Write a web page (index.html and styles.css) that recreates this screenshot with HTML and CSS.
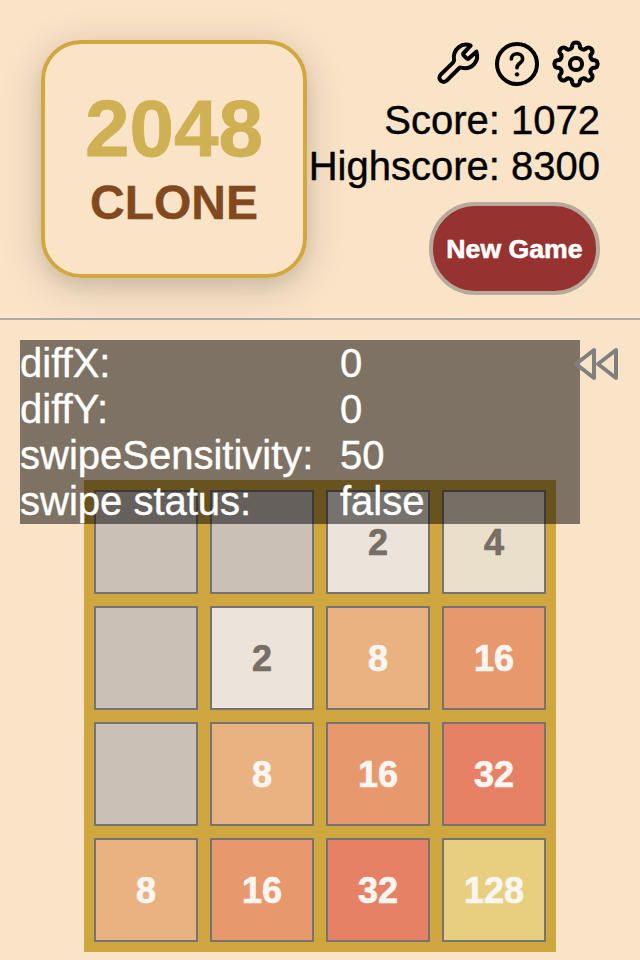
FILE: index.html
```html
<!DOCTYPE html>
<html lang="en">
<head>
<meta charset="utf-8">
<title>2048 Clone</title>
<link rel="stylesheet" href="styles.css">
</head>
<body>
<header class="header">
  <div class="logo">
    <div class="logo-number">2048</div>
    <div class="logo-word">CLONE</div>
  </div>
  <div class="info">
    <nav class="icons">
      <svg class="icon" viewBox="-1 -3 144 144"><path d="M109 14C84 3 54 24 59 58Q59 62 56 65L19 101A12.5 12.5 0 0 0 37 119L75 81Q78 79 81 80C113 88 136 60 126 32L104 52Q100 55 97 52L88 43Q85 40 88 36Z"/></svg>
      <svg class="icon" viewBox="0 0 144 144"><circle cx="72" cy="72" r="60"/><path class="thin" d="M55 57C55 36 89 36 89 57C89 69 72 69 72 83"/><circle class="dot" cx="72" cy="103" r="6.5"/></svg>
      <svg class="icon gear" viewBox="-22.6 -22.6 45.2 45.2"><circle r="5.7"/><path d="M-3.59-17.64A3.75 3.75 0 0 1 3.59-17.64A3.55 3.55 0 0 0 9.93-15.01A3.75 3.75 0 0 1 15.01-9.93A3.55 3.55 0 0 0 17.64-3.59A3.75 3.75 0 0 1 17.64 3.59A3.55 3.55 0 0 0 15.01 9.93A3.75 3.75 0 0 1 9.93 15.01A3.55 3.55 0 0 0 3.59 17.64A3.75 3.75 0 0 1-3.59 17.64A3.55 3.55 0 0 0-9.93 15.01A3.75 3.75 0 0 1-15.01 9.93A3.55 3.55 0 0 0-17.64 3.59A3.75 3.75 0 0 1-17.64-3.59A3.55 3.55 0 0 0-15.01-9.93A3.75 3.75 0 0 1-9.93-15.01A3.55 3.55 0 0 0-3.59-17.64Z"/></svg>
    </nav>
    <div class="score">Score: 1072</div>
    <div class="score">Highscore: 8300</div>
    <button class="new-game">New Game</button>
  </div>
</header>
<main class="main">
  <div class="toolbar">
    <svg class="icon rewind" viewBox="0 0 144 144"><path d="M12 72L66 30V114ZM78 72L132 30V114Z"/></svg>
  </div>
  <div class="board">
    <div class="tile"></div><div class="tile"></div><div class="tile t2">2</div><div class="tile t4">4</div>
    <div class="tile"></div><div class="tile t2">2</div><div class="tile t8">8</div><div class="tile t16">16</div>
    <div class="tile"></div><div class="tile t8">8</div><div class="tile t16">16</div><div class="tile t32">32</div>
    <div class="tile t8">8</div><div class="tile t16">16</div><div class="tile t32">32</div><div class="tile t128">128</div>
  </div>
  <div class="debug">
    <span>diffX:</span><span>0</span>
    <span>diffY:</span><span>0</span>
    <span>swipeSensitivity:</span><span>50</span>
    <span>swipe status:</span><span>false</span>
  </div>
</main>
</body>
</html>
```
FILE: styles.css
```css
* { box-sizing: border-box; }
body {
  margin: 0;
  height: 960px;
  overflow: hidden;
  background: #fae4c8;
  color: #000;
  font: 40px/46px "Liberation Sans", Arial, sans-serif;
  -webkit-text-stroke: .4px;
}
.header {
  display: flex;
  justify-content: space-between;
  align-items: flex-start;
  height: 320px;
  padding: 40px 40px 0 41px;
  border-bottom: 2px solid #a9a9a9;
}
.logo {
  flex: none;
  width: 266px;
  height: 238px;
  padding-top: 41px;
  border: 4px solid #d2a740;
  border-radius: 40px;
  box-shadow: 0 8px 40px rgba(0, 0, 0, .18), 0 8px 16px rgba(0, 0, 0, .06);
  text-align: center;
  font-weight: bold;
}
.logo-number { font-size: 80px; line-height: 88px; color: #cfb053; -webkit-text-stroke: .8px; }
.logo-word { font-size: 48px; line-height: 60px; color: #82491f; }
.info {
  display: flex;
  flex-direction: column;
  align-items: flex-end;
  width: 0;
  white-space: nowrap;
}
.icons { display: flex; gap: 11px; margin-bottom: 9px; }
.icon {
  display: block;
  flex: none;
  width: 48px;
  height: 48px;
  overflow: visible;
  fill: none;
  stroke: #000;
  stroke-width: 12;
  stroke-linejoin: round;
  stroke-linecap: round;
}
.icon .thin { stroke-width: 11; }
.icon .dot { fill: #000; stroke: none; }
.gear { stroke-width: 3.8; }
.new-game {
  width: 171px;
  height: 93px;
  margin-top: 13px;
  padding: 2px 0 0;
  border: 4px solid #b7aa9d;
  border-radius: 46px;
  background: #963230;
  color: #fff;
  font: bold 26.67px "Liberation Sans", Arial, sans-serif;
  -webkit-text-stroke: .6px;
}
.main { position: relative; padding: 20px 20px 0; }
.toolbar { display: flex; justify-content: flex-end; height: 140px; }
.rewind { position: relative; z-index: 2; stroke: #808080; }
.board {
  display: grid;
  grid-template: repeat(4, 104px) / repeat(4, 104px);
  gap: 12px;
  width: 472px;
  height: 472px;
  margin: 0 auto;
  padding: 10px;
  background: #d0a63f;
}
.tile {
  display: flex;
  align-items: center;
  justify-content: center;
  padding-top: 2px;
  border: 2px solid #747474;
  background: #cbc0b6;
  color: #f9f6f2;
  font-size: 36px;
  font-weight: bold;
  -webkit-text-stroke: .7px;
}
.t2 { background: #ece4db; color: #776e65; }
.t4 { background: #eadfcb; color: #776e65; }
.t8 { background: #e9b281; }
.t16 { background: #e7996d; }
.t32 { background: #e68166; }
.t128 { background: #e8cf7f; }
.debug {
  position: absolute;
  top: 20px;
  left: 20px;
  z-index: 1;
  display: grid;
  grid-template-columns: 320px 240px;
  width: 560px;
  background: rgba(0, 0, 0, .5);
  color: #fff;
}
```
